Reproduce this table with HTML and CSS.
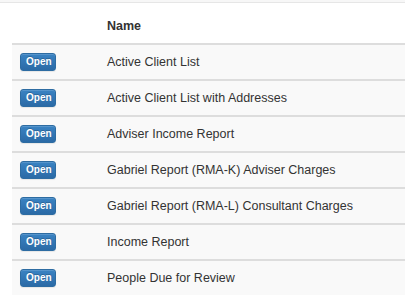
FILE: index.html
```html
<!DOCTYPE html>
<html>
<head>
<meta charset="utf-8">
<link rel="stylesheet" href="styles.css">
</head>
<body>
<div class="topline"></div>
<table class="reports">
  <thead>
    <tr><th class="col-btn"></th><th>Name</th></tr>
  </thead>
  <tbody>
    <tr><td class="col-btn"><button class="btn">Open</button></td><td>Active Client List</td></tr>
    <tr><td class="col-btn"><button class="btn">Open</button></td><td>Active Client List with Addresses</td></tr>
    <tr><td class="col-btn"><button class="btn">Open</button></td><td>Adviser Income Report</td></tr>
    <tr><td class="col-btn"><button class="btn">Open</button></td><td>Gabriel Report (RMA-K) Adviser Charges</td></tr>
    <tr><td class="col-btn"><button class="btn">Open</button></td><td>Gabriel Report (RMA-L) Consultant Charges</td></tr>
    <tr><td class="col-btn"><button class="btn">Open</button></td><td>Income Report</td></tr>
    <tr><td class="col-btn"><button class="btn">Open</button></td><td>People Due for Review</td></tr>
  </tbody>
</table>
</body>
</html>
```

FILE: styles.css
```css
html, body {
  margin: 0;
  padding: 0;
  background: #fff;
  font-family: "Liberation Sans", Arial, sans-serif;
  color: #333;
  overflow: hidden;
}
.topline {
  height: 3px;
  border-bottom: 1px solid #e6e6e6;
  background: #f7f7f7;
  margin-top: -1px;
}
.reports {
  margin-left: 12px;
  width: 400px;
  border-collapse: separate;
  border-spacing: 0;
  font-size: 12.5px;
}
.reports th {
  box-sizing: border-box;
  text-align: left;
  font-weight: bold;
  height: 42px;
  padding: 0 8px 8px;
  border-bottom: 2px solid #ddd;
  vertical-align: bottom;
  line-height: 18px;
}
.reports td {
  box-sizing: border-box;
  height: 36px;
  padding: 0 8px;
  background: #f9f9f9;
  border-top: 2px solid #ddd;
  vertical-align: middle;
}
.reports tbody tr:first-child td {
  border-top: 0;
  height: 34px;
}
.col-btn {
  width: 87px;
}
.btn {
  display: block;
  font-family: "Liberation Sans", Arial, sans-serif;
  font-size: 10px;
  font-weight: bold;
  line-height: 14px;
  padding: 1px 5px;
  width: 36px;
  height: 18px;
  color: #fff;
  border: 1px solid #2d6ca2;
  border-radius: 3px;
  background: linear-gradient(to bottom, #3a83c3 0%, #2b6aa6 100%);
  box-shadow: inset 0 1px 0 rgba(255,255,255,.15), 0 1px 1px rgba(0,0,0,.075);
  text-shadow: 0 -1px 0 rgba(0,0,0,.2);
  text-align: center;
}
```
